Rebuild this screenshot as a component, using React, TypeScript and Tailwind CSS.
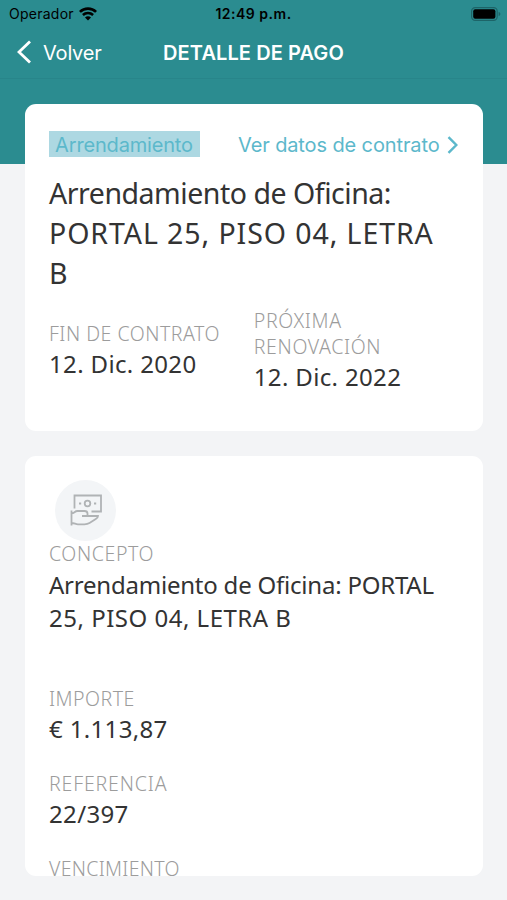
import React from "react";

interface FieldProps {
  label: string;
  value?: React.ReactNode;
  labelClass?: string;
  className?: string;
}

const Field: React.FC<FieldProps> = ({
  label,
  value,
  labelClass = "tracking-[0.5px]",
  className = "",
}) => (
  <div className={className}>
    <p className={`text-[19.5px] leading-[26px] font-light text-[#9c9c9c] ${labelClass}`}>
      {label}
    </p>
    {value && (
      <p className="text-[24px] leading-[33px] tracking-[0.35px] text-[#333]">
        {value}
      </p>
    )}
  </div>
);

const WifiIcon = () => (
  <svg className="h-[14px] w-[18px]" viewBox="0 0 18 14" fill="none" stroke="#000">
    <path d="M0.9 4.9C5.4 0.5 12.6 0.5 17.1 4.9" strokeWidth="2.7" />
    <path d="M3.9 8C6.8 5.2 11.2 5.2 14.1 8" strokeWidth="2.5" />
    <path d="M9 13.4L6 10.4C7.7 8.9 10.3 8.9 12 10.4Z" fill="#000" stroke="none" />
  </svg>
);

const BatteryIcon = () => (
  <svg className="h-[14px] w-[30px]" viewBox="0 0 30 14">
    <rect x="0.6" y="0.6" width="25.6" height="12.8" rx="3.6" fill="none" stroke="#1d6468" strokeWidth="1.2" />
    <rect x="2.2" y="2.3" width="22.2" height="9.4" rx="2" fill="#000" />
    <path d="M27.6 5v4c1.2-.4 1.7-1.1 1.7-2s-.5-1.6-1.7-2z" fill="#1d6468" />
  </svg>
);

const MoneyHandIcon = () => (
  <svg
    className="h-[32px] w-[32px]"
    viewBox="0 0 32 32"
    fill="none"
    stroke="#b0b3b5"
    strokeWidth="1.8"
  >
    <path d="M4.5 14.5V1.5H31V17.5H21.5" />
    <circle cx="17.5" cy="9.5" r="2.8" />
    <path d="M9 9.5h2.2M24 9.5h2.2" strokeWidth="2.2" />
    <path d="M1.5 16.5V31.5M1.5 19.5C4.5 19.5 4.5 17 7.5 17H14.5C16.5 17 17.5 18 17.5 19.5V22H28C28 24 26.5 24.5 25 25.5L19.5 29C17.5 30.3 16.5 30.3 14.5 30.3H8C5.5 30.3 4.5 29 1.5 29M12 22H18" />
  </svg>
);

const Header = () => (
  <header className="h-[164px] bg-[#2b8c90] font-[Inter,sans-serif]">
    <div className="flex h-[27px] items-center justify-between pl-[9px] pr-[6px] text-[14px] leading-none text-black">
      <div className="flex w-[140px] items-center gap-[5px]">
        <span className="tracking-[0.25px]">Operador</span>
        <WifiIcon />
      </div>
      <span className="text-[14px] font-semibold tracking-[0.5px]">12:49 p.m.</span>
      <div className="flex w-[143px] justify-end">
        <BatteryIcon />
      </div>
    </div>
    <div className="grid h-[52px] grid-cols-[1fr_auto_1fr] items-center border-b border-[#28858a] px-[17px] text-white">
      <button className="flex items-center gap-[12px] text-[20px] tracking-[-0.2px]">
        <svg className="mb-px h-[24px] w-[14px]" viewBox="0 0 14 24" fill="none" stroke="currentColor" strokeWidth="2.8">
          <path d="M13 1.5L2 12L13 22.5" />
        </svg>
        Volver
      </button>
      <h1 className="text-[20px] font-semibold tracking-[0.1px]">DETALLE DE PAGO</h1>
      <span />
    </div>
  </header>
);

const ContractCard = () => (
  <section className="h-[327px] rounded-[11px] bg-white px-6 pt-[26px]">
    <div className="flex items-center justify-between font-[Inter,sans-serif] text-[20px] leading-[26px] text-[#5cb8cb]">
      <span className="flex h-[26px] w-[151px] items-center justify-center bg-[#add8e2] pt-[2px] pr-px tracking-[-0.17px]">
        Arrendamiento
      </span>
      <a className="flex items-center gap-[7px] pt-[2px] pr-px tracking-[-0.12px]">
        Ver datos de contrato
        <svg className="h-[18px] w-[11px]" viewBox="0 0 11 18" fill="none" stroke="currentColor" strokeWidth="2.4">
          <path d="M1.5 1.2L9.3 9L1.5 16.8" />
        </svg>
      </a>
    </div>
    <h2 className="mt-[15px] text-[28.5px] leading-10 text-[#333]">
      <span className="block tracking-[-0.47px]">Arrendamiento de Oficina:</span>
      <span className="block tracking-[0.92px]">PORTAL 25, PISO 04, LETRA</span>
      <span className="block">B</span>
    </h2>
    <div className="mt-[15px] grid grid-cols-2 items-center">
      <Field label="FIN DE CONTRATO" value="12. Dic. 2020" />
      <Field
        label="PRÓXIMA RENOVACIÓN"
        value="12. Dic. 2022"
        labelClass="w-[150px] tracking-[0.65px]"
      />
    </div>
  </section>
);

const PaymentCard = () => (
  <section className="h-[420px] overflow-hidden rounded-[11px] bg-white px-6 pt-6">
    <div className="ml-[6px] flex h-[61px] w-[61px] items-center justify-center rounded-full bg-[#f3f5f7] pb-[2px]">
      <MoneyHandIcon />
    </div>
    <Field
      label="CONCEPTO"
      labelClass="mb-px tracking-[0.6px]"
      value={
        <>
          <span className="block tracking-[-0.22px]">Arrendamiento de Oficina: PORTAL</span>
          <span className="block tracking-[0.5px]">25, PISO 04, LETRA B</span>
        </>
      }
    />
    <Field label="IMPORTE" value="€ 1.113,87" className="mt-[52px]" />
    <Field
      label="REFERENCIA"
      value="22/397"
      labelClass="tracking-[0.85px]"
      className="mt-[26px]"
    />
    <Field label="VENCIMIENTO" labelClass="tracking-[0.3px]" className="mt-[26px]" />
  </section>
);

export default function App() {
  return (
    <div className="h-[900px] w-[507px] overflow-hidden bg-[#f3f4f6] font-['Noto_Sans',sans-serif]">
      <Header />
      <main className="-mt-[60px] flex flex-col gap-[25px] pl-[25px] pr-[24.5px]">
        <ContractCard />
        <PaymentCard />
      </main>
    </div>
  );
}
